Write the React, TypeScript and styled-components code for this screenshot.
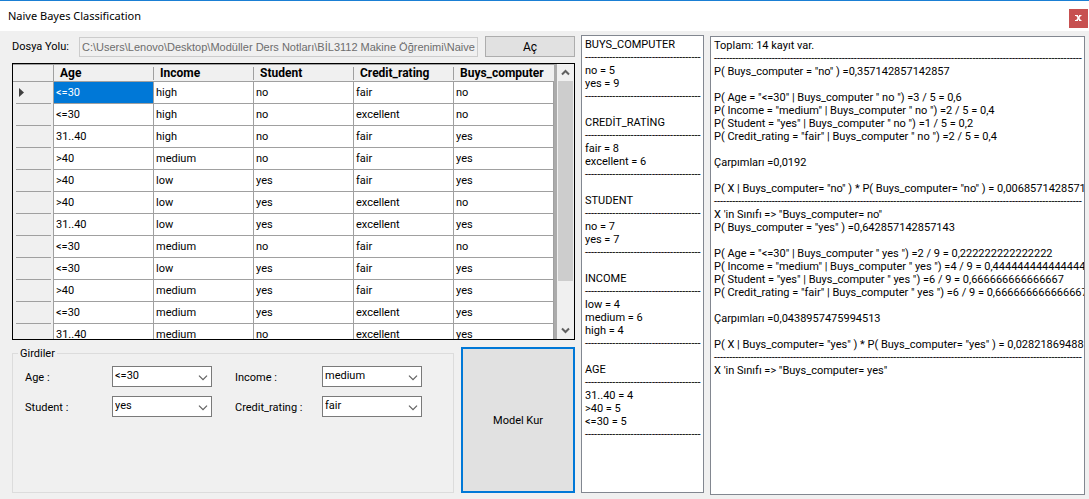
import React, { useId } from "react";
import styled, { createGlobalStyle } from "styled-components";

const GlobalStyle = createGlobalStyle`
  * { box-sizing: border-box; }
  body { margin: 0; background: #f0f0f0; color: #000; }
  body, button, input, select { font-family: Roboto, "Liberation Sans", Arial, sans-serif; font-size: 11px; }
`;

const Window = styled.div`
  display: flex;
  flex-direction: column;
  height: 100vh;
  min-height: 440px;
  border-top: 1px solid #1a7fd4;
  background: #f0f0f0;
`;

const TitleBar = styled.header`
  display: flex;
  align-items: center;
  justify-content: space-between;
  flex: none;
  height: 30px;
  padding: 4px 1px 0 8px;
  background: #fff;
`;

const Title = styled.h1`
  margin: 0 0 4px;
  font: 400 11px/16px "Noto Sans", "Open Sans", sans-serif;
`;

const CloseButton = styled.button`
  display: grid;
  place-items: center;
  width: 19px;
  height: 19px;
  padding: 0;
  border: 0;
  background: #c75050;
`;

const Content = styled.main`
  display: grid;
  grid-template-columns: 563px 123px minmax(0, 1fr);
  gap: 6px;
  flex: 1;
  min-height: 0;
  padding: 4px 4px 4px 12px;
`;

const Workspace = styled.div`
  display: flex;
  flex-direction: column;
  min-height: 0;
  padding: 1px 0 2px;
`;

const FileRow = styled.form`
  display: flex;
  align-items: center;
  flex: none;
  margin-bottom: 6px;
`;

const PathLabel = styled.label`
  width: 67px;
`;

const PathInput = styled.input`
  width: 399px;
  height: 20px;
  margin-right: 7px;
  padding: 0 2px;
  border: 1px solid #ccc;
  background: #f0f0f0;
  color: #6d6d6d;
  font-family: "Liberation Sans", Arial, sans-serif;
`;

const OpenButton = styled.button`
  flex: 1;
  height: 21px;
  padding: 0;
  border: 1px solid #adadad;
  background: #e1e1e1;
  font-size: 12px;
`;

const GridFrame = styled.div`
  display: flex;
  flex: 1;
  min-height: 0;
  border: 1px solid #000;
  background: #ababab;
  overflow: hidden;
`;

const GridTable = styled.table`
  flex: none;
  align-self: flex-start;
  width: 541px;
  border-collapse: separate;
  border-spacing: 0;
  table-layout: fixed;
`;

const CornerCell = styled.td`
  width: 41px;
  height: 18px;
  padding: 0;
  border: solid #a0a0a0;
  border-width: 1px 1px 1px 0;
  background: #f0f0f0;
`;

const HeadCell = styled.th`
  height: 18px;
  padding: 0;
  border: solid #a0a0a0;
  border-width: 1px 0;
  background: #f0f0f0;
  font-size: 12px;
  line-height: 16px;
  text-align: left;

  span {
    display: block;
    height: 13px;
    padding-left: 6px;
    border-right: 1px solid #a0a0a0;
    line-height: 13px;
  }

  &:last-child span {
    border-right: 0;
  }
`;

const RowHead = styled.td`
  height: 22px;
  padding: 0 2px 0 3px;
  border-right: 1px solid #a0a0a0;
  background: #f0f0f0;

  div {
    display: flex;
    align-items: center;
    height: 22px;
    padding-left: 3px;
    border-bottom: 1px solid #a0a0a0;
  }
`;

const Cell = styled.td<{ $selected?: boolean }>`
  height: 22px;
  padding: 1px 2px 0;
  border: solid #a0a0a0;
  border-width: 0 1px 1px 0;
  background: ${(p) => (p.$selected ? "#0078d7" : "#fff")};
  color: ${(p) => (p.$selected ? "#fff" : "#000")};
  line-height: 20px;
`;

const ScrollBar = styled.div`
  display: flex;
  flex-direction: column;
  width: 17px;
  margin-left: auto;
  background: #f0f0f0;
`;

const ScrollButton = styled.button`
  display: grid;
  place-items: center;
  flex: none;
  height: 17px;
  padding: 0;
  border: 0;
  background: #f0f0f0;
`;

const ScrollTrack = styled.div`
  flex: 1;
  padding: 0 1px;
`;

const ScrollThumb = styled.div`
  height: 83%;
  background: #cdcdcd;
`;

const LowerRow = styled.div`
  display: flex;
  flex: none;
  gap: 7px;
  height: 146px;
  margin-top: 7px;
`;

const InputGroup = styled.fieldset`
  display: grid;
  grid-template-columns: 87px 100px 110px 100px;
  grid-auto-rows: 21px;
  align-content: start;
  row-gap: 9px;
  width: 442px;
  margin: 0;
  padding: 6px 12px 0;
  border: 1px solid #dcdcdc;

  label:nth-of-type(even) { padding-left: 23px; }
`;

const GroupTitle = styled.legend`
  height: 13px;
  margin-left: -7px;
  padding: 0 2px;
  line-height: 13px;
`;

const FieldLabel = styled.label`
  line-height: 24px;
  white-space: nowrap;
`;

const Select = styled.select`
  appearance: none;
  width: 100px;
  height: 21px;
  padding: 0 18px 2px 2px;
  border: 1px solid #7a7a7a;
  border-radius: 0;
  background: #fff url("data:image/svg+xml,%3Csvg xmlns='http://www.w3.org/2000/svg' width='10' height='6' fill='none' stroke='%23606060'%3E%3Cpath d='M1 .7l4 4 4-4' stroke-width='1.2'/%3E%3C/svg%3E") no-repeat right 3px top 8px;
  color: #000;
`;

const BuildButton = styled.button`
  flex: 1;
  padding: 0;
  border: 2px solid #0078d7;
  background: #e1e1e1;
`;

const ListBox = styled.ul<{ $result?: boolean }>`
  min-width: 0;
  margin: ${(p) => (p.$result ? "1px 0 0" : "0 0 2px")};
  padding: 2px 1px 0 3px;
  border: 1px solid #828790;
  background: #fff;
  list-style: none;
  overflow: hidden;
`;

const Line = styled.li`
  height: 13px;
  line-height: 13px;
  white-space: pre;
`;

const columns = ["Age", "Income", "Student", "Credit_rating", "Buys_computer"];

const rows = [
  ["<=30", "high", "no", "fair", "no"],
  ["<=30", "high", "no", "excellent", "no"],
  ["31..40", "high", "no", "fair", "yes"],
  [">40", "medium", "no", "fair", "yes"],
  [">40", "low", "yes", "fair", "yes"],
  [">40", "low", "yes", "excellent", "no"],
  ["31..40", "low", "yes", "excellent", "yes"],
  ["<=30", "medium", "no", "fair", "no"],
  ["<=30", "low", "yes", "fair", "yes"],
  [">40", "medium", "yes", "fair", "yes"],
  ["<=30", "medium", "yes", "excellent", "yes"],
  ["31..40", "medium", "no", "excellent", "yes"],
];

const stats: [string, string[]][] = [
  ["BUYS_COMPUTER", ["no = 5", "yes = 9"]],
  ["CREDİT_RATİNG", ["fair = 8", "excellent = 6"]],
  ["STUDENT", ["no = 7", "yes = 7"]],
  ["INCOME", ["low = 4", "medium = 6", "high = 4"]],
  ["AGE", ["31..40 = 4", ">40 = 5", "<=30 = 5"]],
];

const SHORT_RULE = "-".repeat(38);
const RULE = "-".repeat(121);

const results = [
  "Toplam: 14 kayıt var.",
  RULE,
  'P( Buys_computer = "no" ) =0,357142857142857',
  "",
  'P( Age = "<=30" | Buys_computer " no ") =3 / 5 = 0,6',
  'P( Income = "medium" | Buys_computer " no ") =2 / 5 = 0,4',
  'P( Student = "yes" | Buys_computer " no ") =1 / 5 = 0,2',
  'P( Credit_rating = "fair" | Buys_computer " no ") =2 / 5 = 0,4',
  "",
  "Çarpımları =0,0192",
  "",
  'P( X | Buys_computer= "no" ) * P( Buys_computer= "no" ) = 0,0068571428571',
  RULE,
  'X \'in Sınıfı => "Buys_computer= no"',
  'P( Buys_computer = "yes" ) =0,642857142857143',
  "",
  'P( Age = "<=30" | Buys_computer " yes ") =2 / 9 = 0,222222222222222',
  'P( Income = "medium" | Buys_computer " yes ") =4 / 9 = 0,444444444444444',
  'P( Student = "yes" | Buys_computer " yes ") =6 / 9 = 0,666666666666667',
  'P( Credit_rating = "fair" | Buys_computer " yes ") =6 / 9 = 0,666666666666667',
  "",
  "Çarpımları =0,0438957475994513",
  "",
  'P( X | Buys_computer= "yes" ) * P( Buys_computer= "yes" ) = 0,028218694885',
  RULE,
  'X \'in Sınıfı => "Buys_computer= yes"',
];

function Field({ label, value, options }: { label: string; value: string; options: string[] }) {
  const id = useId();
  return (
    <>
      <FieldLabel htmlFor={id}>{label}</FieldLabel>
      <Select id={id} defaultValue={value}>
        {options.map((o) => (
          <option key={o}>{o}</option>
        ))}
      </Select>
    </>
  );
}

function Chevron({ up }: { up?: boolean }) {
  return (
    <svg width="9" height="7" fill="none" stroke="#606060" strokeWidth="2">
      <path d={up ? "M1 5.5l3.5-3.5L8 5.5" : "M1 1.5L4.5 5 8 1.5"} />
    </svg>
  );
}

export default function App() {
  return (
    <>
      <GlobalStyle />
      <Window>
        <TitleBar>
          <Title>Naive Bayes Classification</Title>
          <CloseButton aria-label="Kapat">
            <svg width="7" height="6" fill="none" stroke="#fff">
              <path d="M1.5 0l4 6M5.5 0l-4 6" strokeWidth="1.5" />
              <path d="M0 .5h3M4 .5h2.500M0 5.500h3M4 5.500h2.500" />
            </svg>
          </CloseButton>
        </TitleBar>
        <Content>
          <Workspace>
            <FileRow>
              <PathLabel htmlFor="path">Dosya Yolu:</PathLabel>
              <PathInput
                id="path"
                disabled
                defaultValue="C:\Users\Lenovo\Desktop\Modüller Ders Notları\BİL3112 Makine Öğrenimi\Naive"
              />
              <OpenButton type="button">Aç</OpenButton>
            </FileRow>
            <GridFrame>
              <GridTable>
                <thead>
                  <tr>
                    <CornerCell />
                    {columns.map((c) => (
                      <HeadCell key={c} scope="col">
                        <span>{c}</span>
                      </HeadCell>
                    ))}
                  </tr>
                </thead>
                <tbody>
                  {rows.map((row, r) => (
                    <tr key={r}>
                      <RowHead>
                        <div>
                          {r === 0 && (
                            <svg width="5" height="9" fill="#404040">
                              <path d="M0 0l5 4.5L0 9z" />
                            </svg>
                          )}
                        </div>
                      </RowHead>
                      {row.map((value, c) => (
                        <Cell key={c} $selected={r === 0 && c === 0}>
                          {value}
                        </Cell>
                      ))}
                    </tr>
                  ))}
                </tbody>
              </GridTable>
              <ScrollBar>
                <ScrollButton aria-label="Yukarı">
                  <Chevron up />
                </ScrollButton>
                <ScrollTrack>
                  <ScrollThumb />
                </ScrollTrack>
                <ScrollButton aria-label="Aşağı">
                  <Chevron />
                </ScrollButton>
              </ScrollBar>
            </GridFrame>
            <LowerRow>
              <InputGroup>
                <GroupTitle>Girdiler</GroupTitle>
                <Field label="Age :" value="<=30" options={["<=30", "31..40", ">40"]} />
                <Field label="Income :" value="medium" options={["low", "medium", "high"]} />
                <Field label="Student :" value="yes" options={["yes", "no"]} />
                <Field label="Credit_rating :" value="fair" options={["fair", "excellent"]} />
              </InputGroup>
              <BuildButton type="button">Model Kur</BuildButton>
            </LowerRow>
          </Workspace>
          <ListBox>
            {stats.map(([name, counts], i) => (
              <React.Fragment key={name}>
                {i > 0 && <Line />}
                <Line>{name}</Line>
                <Line>{SHORT_RULE}</Line>
                {counts.map((c) => (
                  <Line key={c}>{c}</Line>
                ))}
                <Line>{SHORT_RULE}</Line>
              </React.Fragment>
            ))}
          </ListBox>
          <ListBox $result>
            {results.map((text, i) => (
              <Line key={i}>{text}</Line>
            ))}
          </ListBox>
        </Content>
      </Window>
    </>
  );
}
